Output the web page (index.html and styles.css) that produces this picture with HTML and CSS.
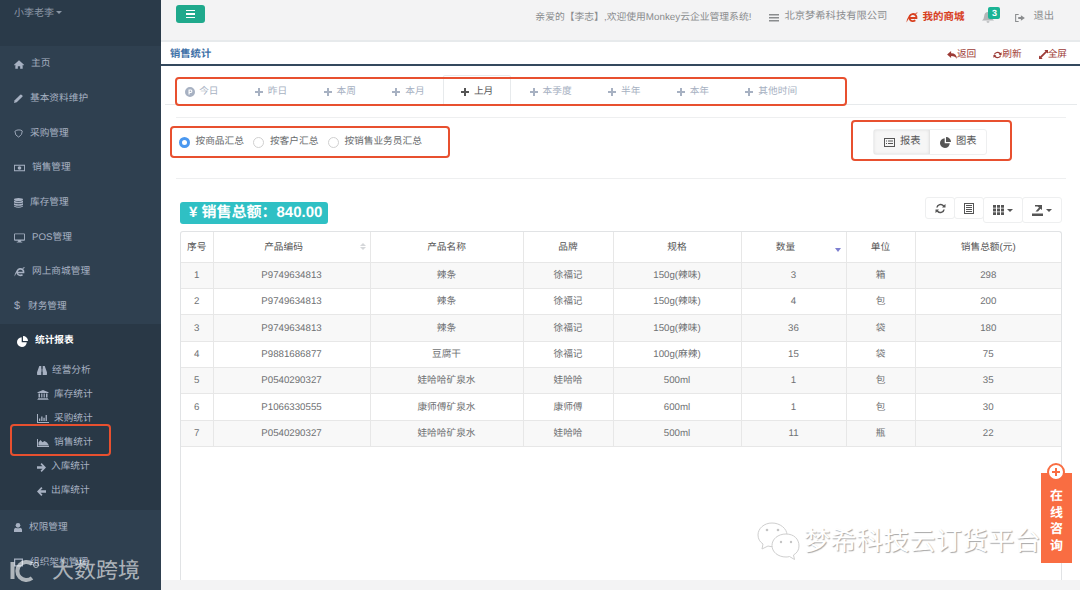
FILE: index.html
```html
<!DOCTYPE html>
<html lang="zh-CN">
<head>
<meta charset="utf-8">
<title>销售统计</title>
<link rel="stylesheet" href="styles.css">
</head>
<body>
<svg class="sprite" aria-hidden="true">
  <symbol id="i-home" viewBox="0 0 12 10"><path d="M6 0l6 5.4-.7.7L10.400 5.400V10H7.400V7H4.600v3H1.600V5.400L.7 6.100 0 5.400z"/></symbol>
  <symbol id="i-pencil" viewBox="0 0 10 10"><path d="M0 10l.7-3L7 .7a1 1 0 0 1 1.300 0l1 1a1 1 0 0 1 0 1.300L3 9.300z"/></symbol>
  <symbol id="i-shield" viewBox="0 0 10 10"><path d="M1 2.500Q3 .8 5.500 1 8 1 9.200 2.200 9.500 6.500 5.200 9 1 7.500 1 2.500z" fill="none" stroke="currentColor"/></symbol>
  <symbol id="i-money" viewBox="0 0 12 8"><path fill-rule="evenodd" d="M0 .5h12v7H0zM1 1.500v5h10v-5zM6 2a2 2 0 1 1 0 4 2 2 0 0 1 0-4z"/></symbol>
  <symbol id="i-db" viewBox="0 0 9 10"><ellipse cx="4.500" cy="1.500" rx="4.500" ry="1.500"/><path d="M0 2.800q4.500 1.900 9 0v1.600q-4.500 1.900-9 0zM0 5.300q4.500 1.900 9 0v1.600q-4.500 1.900-9 0zM0 7.800q4.500 1.900 9 0v.7Q4.500 10.900 0 8.500z"/></symbol>
  <symbol id="i-desktop" viewBox="0 0 12 10"><path fill-rule="evenodd" d="M1 0h10a1 1 0 0 1 1 1v6a1 1 0 0 1-1 1H7.500v1H9v1H3V9h1.500V8H1a1 1 0 0 1-1-1V1a1 1 0 0 1 1-1zm0 1v5.500h10V1z"/></symbol>
  <symbol id="i-ie" viewBox="0 0 12 11"><path d="M3.600 6h6.900A3.600 3.600 0 1 0 9.300 8.300" fill="none" stroke="currentColor" stroke-width="1.800"/><path d="M4.500 3C2 4.500.3 7.800.6 10.500 1.500 8.500 2.800 6.500 3.800 5.300zM9 1.400Q11.500-.5 12 1.200q-.6-.5-2 .9z"/></symbol>
  <symbol id="i-pie" viewBox="0 0 11 11"><path d="M4.700 1.200A4.900 4.900 0 1 0 9.800 6.300H4.700zM6 0a5 5 0 0 1 5 5H6z"/></symbol>
  <symbol id="i-binoculars" viewBox="0 0 11 10"><path d="M2.500 0H4.700V3H5V6.500H4.700V10H.5A.5.5 0 0 1 0 9.500V7zM8.500 0H6.300V3H6V6.500H6.300V10H10.500A.5.5 0 0 0 11 9.500V7z"/></symbol>
  <symbol id="i-bank" viewBox="0 0 11 10"><path d="M5.500 0L11 2.200V3H0V2.200zM1 3.500h1.500v4H1zM3.700 3.500h1.200v4H3.700zM6.100 3.500h1.200v4H6.100zM8.500 3.500H10v4H8.500zM.5 8h10v.8H.5zM0 9.200h11v.8H0z"/></symbol>
  <symbol id="i-bars" viewBox="0 0 12 9"><path d="M0 0h1v8h11v1H0zM2 4.500h1.300V7H2zM4.200 2.500h1.300V7H4.200zM6.400 3.700h1.300V7H6.400zM8.600 1h1.300v6H8.600z"/></symbol>
  <symbol id="i-area" viewBox="0 0 12 9"><path d="M0 1h1v7h11v1H0zM1.500 7.400V4.500L3.500 2l2 2.300L7.500 3 10 4.500l2 2.900z"/></symbol>
  <symbol id="i-right" viewBox="0 0 9 9"><path d="M4.700 0L9 4.500 4.700 9 3.500 7.800 5.500 5.700H0V3.300H5.500L3.500 1.200z"/></symbol>
  <symbol id="i-left" viewBox="0 0 9 9"><path d="M4.300 0L0 4.500 4.300 9 5.500 7.800 3.500 5.700H9V3.300H3.500L5.500 1.200z"/></symbol>
  <symbol id="i-user" viewBox="0 0 9 10"><circle cx="4.500" cy="2.600" r="2.600"/><path d="M0 10V7.500Q0 5.500 2 5.200q2.500 1.400 5 0Q9 5.500 9 7.500V10z"/></symbol>
  <symbol id="i-org" viewBox="0 0 11 10"><path fill-rule="evenodd" d="M0 0h11v10H0zM1.500 1.500V8.500H9.500V1.500z"/></symbol>
  <symbol id="i-plus" viewBox="0 0 8 8"><path d="M3 0h2v3h3v2H5v3H3V5H0V3h3z"/></symbol>
  <symbol id="i-pp" viewBox="0 0 10 10"><path fill-rule="evenodd" d="M5 0a5 5 0 1 1 0 10A5 5 0 0 1 5 0zM3.500 2.500V7.500H4.700V6H6a1.800 1.800 0 0 0 0-3.500zM4.700 3.500H5.800a.8.8 0 0 1 0 1.500H4.700z"/></symbol>
  <symbol id="i-server" viewBox="0 0 10 8"><path d="M0 0h10v1.500H0zM0 3h10v1.500H0zM0 6h10v1.500H0z"/></symbol>
  <symbol id="i-bell" viewBox="0 0 12 11"><path d="M6 0q3.500 0 3.800 4 .2 3 2.200 4.500H0Q2 7 2.200 4 2.500 0 6 0zM4.500 9.300h3a1.500 1.500 0 0 1-3 0z"/></symbol>
  <symbol id="i-logout" viewBox="0 0 11 9"><path d="M4 0v1H1.200v7H4v1H0V0zM6.500 1.500L11 4.500 6.500 7.500V5.700H3.500V3.300h3z"/></symbol>
  <symbol id="i-reply" viewBox="0 0 11 9"><path d="M4.500 0v2.500Q11 2.500 11 9 9.500 5.500 4.500 5.500V8L0 4z"/></symbol>
  <symbol id="i-refresh" viewBox="0 0 11 9"><path d="M1 4A4.500 4 0 0 1 9 2.200L10.500 1v3.500H7L8 3.500A3 3 0 0 0 2.500 4zM10 5A4.500 4 0 0 1 2 6.800L.5 8V4.500H4L3 5.500A3 3 0 0 0 8.500 5z"/></symbol>
  <symbol id="i-expand" viewBox="0 0 10 10"><path d="M6 0h4v4L8.500 2.800 2.800 8.500 4 10H0V6l1.200 1.200L7.200 1.500z"/></symbol>
  <symbol id="i-list" viewBox="0 0 11 9"><path fill-rule="evenodd" d="M0 0h11v9H0zM1 1v7h9V1zM2 2.500h1v1H2zM4 2.500h5v1H4zM2 5h1v1H2zM4 5h5v1H4z"/></symbol>
  <symbol id="i-sync" viewBox="0 0 11 11"><path d="M1.200 4.500A4.500 4.500 0 0 1 9 2.200L10.500 1v3.500H7L8 3.400A3 3 0 0 0 2.700 4.500zM9.800 6.500A4.500 4.500 0 0 1 2 8.800L.5 10V6.500H4L3 7.600A3 3 0 0 0 8.300 6.500z"/></symbol>
  <symbol id="i-doc" viewBox="0 0 10 11"><path fill-rule="evenodd" d="M0 0h10v11H0zM1 1v9h8V1zM2 2h6v1H2zM2 4h6v1H2zM2 6h6v1H2zM2 8h6v1H2z"/></symbol>
  <symbol id="i-grid" viewBox="0 0 11 10"><path d="M0 0h3v2.800H0zM4 0h3v2.800H4zM8 0h3v2.800H8zM0 3.600h3v2.800H0zM4 3.600h3v2.800H4zM8 3.600h3v2.800H8zM0 7.200h3V10H0zM4 7.200h3V10H4zM8 7.200h3V10H8z"/></symbol>
  <symbol id="i-export" viewBox="0 0 11 11"><path d="M0 8.500h11V11H0zM3 0h7v5L8.500 3.700 6 6.500H3.500L7 2.600 5.500 1.500H3z"/></symbol>
</svg>

<div class="page">
  <aside class="side">
    <div class="profile">小李老李<span class="caret"></span></div>
    <nav class="nav">
      <a class="item"><svg width="10" height="9"><use href="#i-home"/></svg>主页</a>
      <a class="item"><svg width="9" height="9"><use href="#i-pencil"/></svg>基本资料维护</a>
      <a class="item"><svg width="9" height="9"><use href="#i-shield"/></svg>采购管理</a>
      <a class="item"><svg width="11" height="8"><use href="#i-money"/></svg>销售管理</a>
      <a class="item"><svg width="9" height="10"><use href="#i-db"/></svg>库存管理</a>
      <a class="item"><svg width="11" height="10"><use href="#i-desktop"/></svg>POS管理</a>
      <a class="item"><svg width="11" height="10"><use href="#i-ie"/></svg>网上商城管理</a>
      <a class="item"><span class="dollar">$</span>财务管理</a>
      <div class="group">
        <a class="item item-open"><svg width="11" height="11"><use href="#i-pie"/></svg>统计报表</a>
        <a class="sub"><svg width="10" height="9"><use href="#i-binoculars"/></svg>经营分析</a>
        <a class="sub"><svg width="12" height="10"><use href="#i-bank"/></svg>库存统计</a>
        <a class="sub"><svg width="12" height="9"><use href="#i-bars"/></svg>采购统计</a>
        <a class="sub"><svg width="12" height="9"><use href="#i-area"/></svg>销售统计</a>
        <a class="sub"><svg width="9" height="9"><use href="#i-right"/></svg>入库统计</a>
        <a class="sub"><svg width="9" height="9"><use href="#i-left"/></svg>出库统计</a>
      </div>
      <a class="item"><svg width="8" height="9"><use href="#i-user"/></svg>权限管理</a>
      <a class="item"><svg width="9" height="9"><use href="#i-org"/></svg>组织架构管理</a>
    </nav>
  </aside>

  <main class="main">
    <header class="top">
      <button class="menu-btn" type="button"><span></span><span></span><span></span></button>
      <div class="top-right">
        <span class="welcome">亲爱的【李志】,欢迎使用Monkey云企业管理系统!</span>
        <span class="company"><svg width="10" height="8"><use href="#i-server"/></svg>北京梦希科技有限公司</span>
        <span class="mall"><svg width="12" height="11"><use href="#i-ie"/></svg>我的商城</span>
        <span class="bell"><svg width="12" height="11"><use href="#i-bell"/></svg><b class="badge">3</b></span>
        <span class="logout"><svg width="10" height="8"><use href="#i-logout"/></svg>退出</span>
      </div>
    </header>

    <div class="crumb">
      <span class="crumb-title">销售统计</span>
      <div class="crumb-tools">
        <a><svg width="10" height="8"><use href="#i-reply"/></svg>返回</a>
        <a><svg width="9" height="8"><use href="#i-refresh"/></svg>刷新</a>
        <a><svg width="9" height="9"><use href="#i-expand"/></svg>全屏</a>
      </div>
    </div>

    <section class="content">
      <ul class="tabs">
        <li class="tab"><svg width="10" height="10"><use href="#i-pp"/></svg>今日</li>
        <li class="tab"><svg width="8" height="8"><use href="#i-plus"/></svg>昨日</li>
        <li class="tab"><svg width="8" height="8"><use href="#i-plus"/></svg>本周</li>
        <li class="tab"><svg width="8" height="8"><use href="#i-plus"/></svg>本月</li>
        <li class="tab tab-on"><svg width="8" height="8"><use href="#i-plus"/></svg>上月</li>
        <li class="tab"><svg width="8" height="8"><use href="#i-plus"/></svg>本季度</li>
        <li class="tab"><svg width="8" height="8"><use href="#i-plus"/></svg>半年</li>
        <li class="tab"><svg width="8" height="8"><use href="#i-plus"/></svg>本年</li>
        <li class="tab"><svg width="8" height="8"><use href="#i-plus"/></svg>其他时间</li>
      </ul>

      <div class="filter">
        <div class="radios">
          <label class="radio"><i class="dot dot-on"></i>按商品汇总</label>
          <label class="radio"><i class="dot"></i>按客户汇总</label>
          <label class="radio"><i class="dot"></i>按销售业务员汇总</label>
        </div>
        <div class="toggle">
          <a class="toggle-btn toggle-on"><svg width="11" height="9"><use href="#i-list"/></svg>报表</a>
          <a class="toggle-btn"><svg width="11" height="11"><use href="#i-pie"/></svg>图表</a>
        </div>
      </div>

      <div class="bar">
        <div class="total">¥ 销售总额：840.00</div>
        <div class="tools">
          <a class="tool"><svg width="11" height="11"><use href="#i-sync"/></svg></a>
          <a class="tool"><svg width="10" height="11"><use href="#i-doc"/></svg></a>
          <a class="tool tool-drop"><svg width="11" height="10"><use href="#i-grid"/></svg><span class="caret"></span></a>
          <a class="tool tool-drop"><svg width="11" height="11"><use href="#i-export"/></svg><span class="caret"></span></a>
        </div>
      </div>

      <div class="card">
        <table class="grid">
          <colgroup>
            <col class="c1"><col class="c2"><col class="c3"><col class="c4"><col class="c5"><col class="c6"><col class="c7"><col>
          </colgroup>
          <thead>
            <tr>
              <th>序号</th>
              <th class="sortable">产品编码<span class="sort-both"></span></th>
              <th>产品名称</th>
              <th>品牌</th>
              <th>规格</th>
              <th class="sortable">数量<span class="sort-down"></span></th>
              <th>单位</th>
              <th>销售总额(元)</th>
            </tr>
          </thead>
          <tbody>
            <tr><td>1</td><td>P9749634813</td><td>辣条</td><td>徐福记</td><td>150g(辣味)</td><td>3</td><td>箱</td><td>298</td></tr>
            <tr><td>2</td><td>P9749634813</td><td>辣条</td><td>徐福记</td><td>150g(辣味)</td><td>4</td><td>包</td><td>200</td></tr>
            <tr><td>3</td><td>P9749634813</td><td>辣条</td><td>徐福记</td><td>150g(辣味)</td><td>36</td><td>袋</td><td>180</td></tr>
            <tr><td>4</td><td>P9881686877</td><td>豆腐干</td><td>徐福记</td><td>100g(麻辣)</td><td>15</td><td>袋</td><td>75</td></tr>
            <tr><td>5</td><td>P0540290327</td><td>娃哈哈矿泉水</td><td>娃哈哈</td><td>500ml</td><td>1</td><td>包</td><td>35</td></tr>
            <tr><td>6</td><td>P1066330555</td><td>康师傅矿泉水</td><td>康师傅</td><td>600ml</td><td>1</td><td>包</td><td>30</td></tr>
            <tr><td>7</td><td>P0540290327</td><td>娃哈哈矿泉水</td><td>娃哈哈</td><td>500ml</td><td>11</td><td>瓶</td><td>22</td></tr>
          </tbody>
        </table>
      </div>
    </section>
    <div class="foot"></div>
  </main>

  <div class="mark mark-tabs"></div>
  <div class="mark mark-radios"></div>
  <div class="mark mark-toggle"></div>
  <div class="mark mark-side"></div>

  <aside class="consult">
    <span class="consult-plus"></span>
    <span class="consult-text">在线咨询</span>
  </aside>

  <div class="wm-right">
    <svg width="44" height="38" viewBox="0 0 44 38"><g fill="#fff" stroke="#cfcfcf"><path d="M15 1C7 1 1 6.500 1 13c0 4 2 7 5 9l-1 5 6-3q2 .6 4 .6C23 24.600 30 19 30 13 30 6.500 23 1 15 1z"/><path d="M29 12c-8 0-14 5-14 11.500S21 35 29 35q2 0 3.500-.5l5 3-1-4.500c3.500-2 5.500-5 5.500-9C42 17 37 12 29 12z"/><g fill="#c4c4c4" stroke="none"><circle cx="10" cy="8" r="1.300"/><circle cx="21" cy="8" r="1.300"/><circle cx="24" cy="20" r="1.200"/><circle cx="34" cy="20" r="1.200"/></g></g></svg>
    <span>梦希科技云订货平台</span>
  </div>
  <div class="wm-left">
    <svg width="30" height="24" viewBox="0 0 30 24"><path d="M2.500 3v17M22 5a9 9 0 1 0 0 14" fill="none" stroke="currentColor" stroke-width="4"/><circle cx="26" cy="6" r="2.500" fill="none" stroke="currentColor"/></svg>
    <span>大数跨境</span>
  </div>
</div>
</body>
</html>
```

FILE: styles.css
```css
* { box-sizing: border-box; }
html, body { margin: 0; height: 100%; }
body {
  font: 9.700px/1.4 "Liberation Sans", "Noto Sans CJK SC", sans-serif;
  color: #676a6c;
  background: #fff;
  overflow: hidden;
  text-rendering: geometricPrecision;
}
svg { fill: currentColor; flex: none; display: block; }
a { color: inherit; text-decoration: none; }
ul { list-style: none; margin: 0; padding: 0; }
.sprite { position: absolute; width: 0; height: 0; }

.page { position: relative; display: flex; width: 1080px; height: 590px; overflow: hidden; }

/* sidebar */
.side { flex: 0 0 161px; background: #2f4050; color: #a7b1c2; }
.profile {
  height: 46px;
  padding: 7px 0 0 14px;
  background: #2a3a49;
  color: #8a96a5;
  font-size: 10px;
}
.caret {
  display: inline-block;
  width: 0;
  height: 0;
  margin-left: 2px;
  vertical-align: 2px;
  border: 3px solid transparent;
  border-top-color: currentColor;
  border-bottom-width: 0;
}
.item {
  display: flex;
  align-items: center;
  gap: 7px;
  height: 34.700px;
  padding: 1.500px 0 0 14px;
}
.dollar { width: 7px; font-size: 11px; }
.group { background: #293846; padding-bottom: 7px; }
.item-open { padding-left: 17px; height: 34px; color: #fff; font-weight: 700; }
.sub {
  display: flex;
  align-items: center;
  gap: 5px;
  height: 24.200px;
  padding: 1.500px 0 0 37px;
}

/* main */
.main { flex: 1; min-width: 0; display: flex; flex-direction: column; }
.top {
  height: 42px;
  flex: none;
  display: flex;
  justify-content: space-between;
  align-items: center;
  padding: 0 26px 5px 15px;
  background: #f3f3f4;
  border-bottom: 2px solid #e7eaec;
}
.menu-btn {
  display: flex;
  flex-direction: column;
  justify-content: center;
  align-items: center;
  gap: 2px;
  width: 29px;
  height: 18px;
  padding: 0;
  margin-bottom: 7px;
  border: 0;
  border-radius: 3px;
  background: #1fa98c;
}
.menu-btn span { width: 9px; height: 1.500px; background: #fff; }
.top-right { display: flex; align-items: center; color: #8a8c8e; font-size: 10.300px; }
.welcome { font-size: 9.800px; margin-right: 18px; }
.company { display: flex; align-items: center; gap: 5px; margin-right: 19px; }
.mall { display: flex; align-items: center; gap: 4px; margin-right: 18px; color: #d8401f; font-weight: 700; font-size: 10.500px; }
.bell { position: relative; margin-right: 21px; color: #b4b6b8; }
.badge {
  position: absolute;
  left: 6px;
  top: -5px;
  width: 12px;
  height: 12px;
  border-radius: 2px;
  background: #1ab394;
  color: #fff;
  font-size: 9px;
  line-height: 12px;
  text-align: center;
}
.logout { display: flex; align-items: center; gap: 8px; }

.crumb {
  height: 24px;
  flex: none;
  display: flex;
  justify-content: space-between;
  align-items: center;
  padding: 4px 13px 0 9px;
  border-bottom: 2px solid #34495e;
}
.crumb-title { color: #3f72a8; font-weight: 700; font-size: 10.300px; }
.crumb-tools { display: flex; gap: 17px; color: #9c3a35; }
.crumb-tools a { display: flex; align-items: center; }

.content { flex: 1; min-height: 0; display: flex; flex-direction: column; }
.tabs {
  display: flex;
  height: 30px;
  margin: 9px 3px 0 4px;
  padding-left: 2px;
  border-bottom: 1px solid #e7eaec;
  color: #a7b1c2;
}
.tab { display: flex; align-items: center; gap: 5px; padding: 3px 18.170px 0; height: 30px; }
.tab svg[width="10"] { margin-right: -1px; }
.tab-on {
  color: #555;
  background: #fff;
  box-shadow: inset 0 0 0 1px #e7eaec;
  border-radius: 2px 2px 0 0;
}

.filter {
  display: flex;
  justify-content: space-between;
  align-items: center;
  height: 62px;
  margin: 12px 14px 0 15px;
  padding: 0 79px 0 3px;
  border-top: 1px solid #eeeff0;
  border-bottom: 1px solid #eeeff0;
}
.radios { display: flex; margin-top: -13px; }
.radio { display: flex; align-items: center; gap: 5.500px; margin-right: 9.500px; }
.dot { width: 11px; height: 11px; border: 1px solid #d0d0d0; border-radius: 50%; margin-top: 2px; background: #fff; }
.dot-on { border: 3.500px solid #4a98f0; background: #fff; }
.toggle { display: flex; margin-top: -13px; border: 1px solid #eeeff0; border-radius: 3px; height: 26px; }
.toggle-btn { display: flex; align-items: center; gap: 5px; width: 56px; padding: 2px 0 0 10px; color: #555; font-size: 10.300px; }
.toggle-on { background: #f6f6f6; border-right: 1px solid #e4e4e4; box-shadow: inset 0 0 3px #ddd; }

.bar {
  flex: none;
  display: flex;
  justify-content: space-between;
  align-items: flex-start;
  height: 52px;
  padding: 18px 18px 0 19px;
}
.total {
  margin-top: 5px;
  height: 22px;
  padding: 0 6px 0 9px;
  border-radius: 3px;
  background: #2fc0c4;
  color: #fff;
  font-size: 15px;
  font-weight: 700;
  line-height: 22px;
}
.tools { display: flex; color: #555; align-items: flex-start; }
.tool {
  display: flex;
  align-items: center;
  justify-content: center;
  width: 30px;
  height: 22px;
  border: 1px solid #eeeff0;
  margin-left: -1px;
  border-radius: 3px;
}
.tool-drop { width: 40px; height: 26px; gap: 3px; }
.tool-drop .caret { margin: 0; }

.card {
  flex: 1;
  min-height: 0;
  margin: 0 18px 0 19px;
  border: 1px solid #e1e3e5;
  border-bottom-width: 0;
  border-radius: 3px 3px 0 0;
}
.grid { width: 100%; border-collapse: collapse; table-layout: fixed; text-align: center; }
.c1 { width: 32px; }
.c2 { width: 157px; }
.c3 { width: 153px; }
.c4 { width: 90px; }
.c5 { width: 128px; }
.c6 { width: 105px; }
.c7 { width: 69px; }
.grid th, .grid td { border: 1px solid #e7e7e7; padding: 0; }
.grid tr > :first-child { border-left: 0; }
.grid tr > :last-child { border-right: 0; }
.grid thead tr > * { border-top: 0; }
.grid th { position: relative; height: 30px; padding-top: 3px; font-weight: 400; color: #555; }
.grid .sortable { padding-right: 16px; }
.grid td { height: 26.400px; padding-top: 1px; color: #6f7173; }
.grid tbody tr:nth-child(odd) { background: #f8f8f8; }
.sort-both, .sort-down { position: absolute; width: 0; height: 0; border: 3px solid transparent; }
.sort-both { right: 4px; top: 11px; border-bottom-color: #d5d7da; border-top-width: 0; }
.sort-both::after {
  content: "";
  position: absolute;
  left: -3px;
  top: 4px;
  border: 3px solid transparent;
  border-top-color: #d5d7da;
  border-bottom-width: 0;
}
.sort-down { right: 5px; top: 16px; border-top: 4px solid #7d7fd0; border-bottom-width: 0; }

.foot { flex: none; height: 10px; background: #f3f3f4; }

/* annotations and floats */
.mark { position: absolute; border: 2px solid #e8502f; border-radius: 4px; pointer-events: none; }
.mark-tabs { left: 175px; top: 77px; width: 672px; height: 29px; }
.mark-radios { left: 170px; top: 126px; width: 280px; height: 32px; }
.mark-toggle { left: 851px; top: 120px; width: 161px; height: 41px; }
.mark-side { left: 10px; top: 424px; width: 101px; height: 32px; }

.consult {
  position: absolute;
  left: 1041px;
  top: 473px;
  width: 31px;
  height: 90px;
  background: #f96d42;
  color: #fff;
  text-align: center;
}
.consult-plus {
  position: absolute;
  left: 6px;
  top: -10px;
  width: 18px;
  height: 18px;
  border-radius: 50%;
  background: #fff;
  border: 2px solid #f96d42;
}
.consult-plus::before, .consult-plus::after { content: ""; position: absolute; background: #f96d42; }
.consult-plus::before { left: 3px; top: 6px; width: 8px; height: 2px; }
.consult-plus::after { left: 6px; top: 3px; width: 2px; height: 8px; }
.consult-text {
  display: block;
  width: 13px;
  margin: 15px auto 0;
  font-size: 13px;
  font-weight: 700;
  line-height: 16.700px;
  word-break: break-all;
}

.wm-right {
  position: absolute;
  left: 757px;
  top: 522px;
  display: flex;
  align-items: center;
  gap: 3px;
  color: #fff;
  font-size: 26.300px;
  line-height: 38px;
  text-shadow: 1px 1px 1px #a8a8a8;
  white-space: nowrap;
}
.wm-left {
  position: absolute;
  left: 10px;
  top: 556px;
  display: flex;
  align-items: center;
  gap: 12px;
  color: rgba(255, 255, 255, .62);
  font-size: 22px;
  line-height: 30px;
  white-space: nowrap;
}
```
